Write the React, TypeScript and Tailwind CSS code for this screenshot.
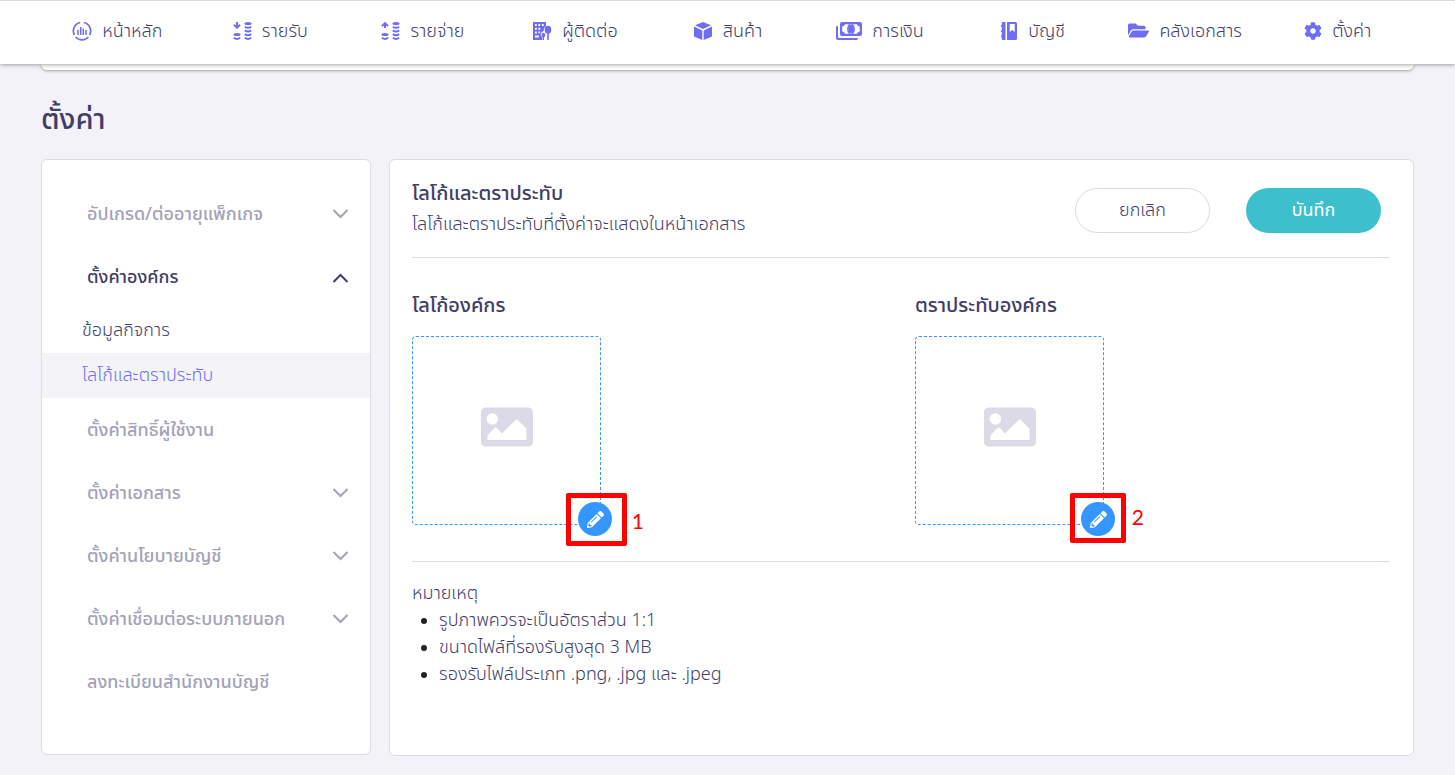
import React from "react";
import { FaCog, FaFolderOpen, FaImage, FaPencilAlt } from "react-icons/fa";

const HomeIcon = () => (
  <svg width="20" height="20" viewBox="0 0 20 20" fill="none" stroke="currentColor">
    <path d="M8.200 1.500A8.600 8.600 0 0 0 2.400 14M11.800 1.500A8.600 8.600 0 0 1 17.600 14M3.600 16A8.700 8.700 0 0 0 16.400 16" strokeWidth="1.700" />
    <path d="M6 9V14M8.700 6V14M11.300 7.500V14M14 9V14" strokeWidth="1.500" />
  </svg>
);

const CoinsIcon = ({ up = false }: { up?: boolean }) => (
  <svg width="20" height="20" viewBox="0 0 20 20" fill="currentColor">
    <path d={up ? "M5 .8L8.800 4.400L7.500 5.700L6 4.400V7H4V4.400L2.500 5.700L1.200 4.400Z" : "M5 8L8.800 4.400L7.500 3.100L6 4.400V1H4V4.400L2.500 3.100L1.200 4.400Z"} />
    <ellipse cx="5" cy="13.500" rx="3.600" ry="1.600" />
    <ellipse cx="16" cy="2.600" rx="3.600" ry="1.600" />
    <path
      d="M1.800 16.800Q5 19.200 8.200 16.800M12.800 5.700Q16 8 19.200 5.700M12.800 9.400Q16 11.700 19.200 9.400M12.800 13.100Q16 15.400 19.200 13.100M12.800 16.800Q16 19.200 19.200 16.800"
      fill="none"
      stroke="currentColor"
      strokeWidth="2"
    />
  </svg>
);

const ContactIcon = () => (
  <svg width="20" height="20" viewBox="0 0 20 20" fill="currentColor">
    <path
      fillRule="evenodd"
      d="M1 1H14V5Q11.500 6.500 11.700 10Q9 10.500 8.600 13.500Q8.700 15.500 10.400 16.200V19H1ZM3 3V5H4.800V3ZM6.400 3V5H8.200V3ZM9.900 3V5H11.700V3ZM3 6.800V8.800H4.800V6.800ZM6.400 6.800V8.800H8.200V6.800ZM3 10.600V12.600H4.800V10.600ZM6.400 10.600V12.200H7.600L8.200 10.600ZM3 14.500V16.500H6.800V14.500Z"
    />
    <ellipse cx="16" cy="8.700" rx="3.300" ry="3.900" />
    <path d="M15.200 11H16.800V19H15.200ZM10.800 15H12V19H10.800Z" />
    <ellipse cx="11.400" cy="14" rx="1.900" ry="2.200" />
  </svg>
);

const MoneyIcon = () => (
  <svg width="26" height="20" viewBox="0 0 26 20" fill="currentColor">
    <path
      fillRule="evenodd"
      d="M6 1H24Q26 1 26 3V13Q26 15 24 15H6Q4 15 4 13V3Q4 1 6 1ZM9 3.200Q8.600 5.300 6.200 5.500V10.500Q8.600 10.700 9 12.800H13Q11 11 11 8T13 3.200ZM17 3.200Q19 5 19 8T17 12.800H21Q21.400 10.700 23.800 10.500V5.500Q21.400 5.300 21 3.200ZM15 3.200Q12.500 4 12.500 8T15 12.800Q17.500 12 17.500 8T15 3.200Z"
    />
    <ellipse cx="15" cy="8" rx="2.800" ry="4.300" />
    <path d="M0 6Q0 5 2 5V16Q2 17 3 17H22Q22 19 20.500 19H2Q0 19 0 17Z" />
  </svg>
);

const BookIcon = () => (
  <svg width="18" height="20" viewBox="0 0 18 20" fill="currentColor">
    <path d="M2.500 1H5.500V19H2.500Q1.800 19 1.800 18V16.200H1V14.500H1.800V11H1V9.300H1.800V5.700H1V4H1.800V2Q1.800 1 2.500 1Z" />
    <path fillRule="evenodd" d="M7 1H15.500Q17 1 17 2.500V17.500Q17 19 15.500 19H7ZM9.700 3V11L12.200 9L14.700 11V3Z" />
  </svg>
);

// solid box with the top face split from the two sides
const CubeIcon = () => (
  <svg width="20" height="20" viewBox="0 0 20 20" fill="currentColor">
    <path d="M10 1L18 4.200L10 8L2 4.200ZM1 5.600L9.300 9.400V19L1 15.400ZM19 5.600L10.700 9.400V19L19 15.400Z" />
  </svg>
);

const Chevron = ({ open }: { open?: boolean }) => (
  <svg width="17" height="12" viewBox="0 0 17 12" fill="none" stroke="currentColor" strokeWidth="2">
    <path d={open ? "M1.500 11L8.500 4L15.500 11" : "M1.500 2L8.500 9L15.500 2"} />
  </svg>
);

export default function App() {
  return (
    <div className="min-h-screen bg-[#f3f2f8] pb-5 font-['Noto_Sans_Thai','Open_Sans',sans-serif] text-[#413d69]">
      <nav className="relative z-10 border-t border-[#dedede] bg-white px-[41px] shadow-[0_1px_4px_rgba(0,0,0,0.35)]">
        <ul className="grid h-[63px] grid-cols-9 pb-px">
          {navItems.map((item) => (
            <li key={item.label} className="flex items-center justify-center">
              <a href="#" className="flex items-center gap-[10px] whitespace-nowrap text-lg font-light">
                <span className="pb-[3px] text-[#6f6cf5]">{item.icon}</span>
                {item.label}
              </a>
            </li>
          ))}
        </ul>
      </nav>

      <div className="px-[41px]">
        <div className="h-[6px] rounded-b-md bg-white shadow-[0_1px_3px_rgba(0,0,0,0.35)]" />
        <h1 className="mt-[29px] mb-[18px] text-[29px] leading-[42px] font-medium">ตั้งค่า</h1>

        <div className="flex items-start gap-[18px]">
          <aside className="w-[330px] shrink-0 rounded-md border border-[#dbdae7] bg-white pt-[22px] pb-[41px]">
            {menu.map((item) => (
              <div key={item.label}>
                <button
                  className={
                    "flex h-[63px] w-full items-center justify-between pr-[21px] pl-[45px] text-left text-lg font-medium " +
                    (item.children ? "text-[#413d69]" : "text-[#a3a2b7]")
                  }
                >
                  <span className="pt-0.5">{item.label}</span>
                  {item.arrow && <Chevron open={!!item.children} />}
                </button>
                {item.children?.map((child) => (
                  <a
                    key={child.label}
                    href="#"
                    className={
                      "flex h-[45px] items-center pl-10 text-lg font-light " +
                      (child.active ? "bg-[#f4f4f7] text-[#6f6cf5]" : "")
                    }
                  >
                    {child.label}
                  </a>
                ))}
              </div>
            ))}
          </aside>

          <main className="min-w-0 flex-1 rounded-md border border-[#dbdae7] bg-white pr-[23px] pb-[67px] pl-[22px]">
            <header className="flex h-[98px] items-center justify-between border-b border-[#dbdae7] pt-1 pr-[9px]">
              <div className="pb-[3px]">
                <h2 className="text-xl leading-8 font-medium">โลโก้และตราประทับ</h2>
                <p className="text-lg leading-[30px] font-light">โลโก้และตราประทับที่ตั้งค่าจะแสดงในหน้าเอกสาร</p>
              </div>
              <div className="flex gap-9 text-lg">
                <button className="h-[45px] w-[135px] rounded-full border border-[#dbdae7] font-light">ยกเลิก</button>
                <button className="h-[45px] w-[135px] rounded-full bg-[#3ebfcc] text-white">บันทึก</button>
              </div>
            </header>

            <div className="grid grid-cols-2 gap-7 border-b border-[#dbdae7] pt-8 pb-9">
              {uploads.map((upload) => (
                <section key={upload.title}>
                  <h3 className="mb-[14px] text-xl leading-8 font-medium">{upload.title}</h3>
                  <div className="relative flex size-[189px] items-center justify-center rounded border border-dashed border-[#3397ff]">
                    <FaImage className="mt-[-8px] size-[52px] text-[#dbdae7]" />
                    <button
                      aria-label={upload.title}
                      className="absolute -right-3 -bottom-3 flex size-[34px] items-center justify-center rounded-full bg-[#3397ff] text-white"
                    >
                      <FaPencilAlt className="size-[17px]" />
                    </button>
                    <span className={"pointer-events-none absolute rounded-xs border-5 border-[#ff0000] " + upload.frame} />
                    <span className={"absolute font-['Lato',sans-serif] text-[21px] leading-6 text-[#ff0000] " + upload.mark}>{upload.number}</span>
                  </div>
                </section>
              ))}
            </div>

            <div className="pt-[18px] text-lg leading-[27px] font-light">
              <p>หมายเหตุ</p>
              <ul className="list-disc pl-[27px] marker:text-base marker:text-[#212529]">
                <li>รูปภาพควรจะเป็นอัตราส่วน 1:1</li>
                <li>ขนาดไฟล์ที่รองรับสูงสุด 3 MB</li>
                <li>รองรับไฟล์ประเภท .png, .jpg และ .jpeg</li>
              </ul>
            </div>
          </main>
        </div>
      </div>
    </div>
  );
}

const navItems = [
  { label: "หน้าหลัก", icon: <HomeIcon /> },
  { label: "รายรับ", icon: <CoinsIcon /> },
  { label: "รายจ่าย", icon: <CoinsIcon up /> },
  { label: "ผู้ติดต่อ", icon: <ContactIcon /> },
  { label: "สินค้า", icon: <CubeIcon /> },
  { label: "การเงิน", icon: <MoneyIcon /> },
  { label: "บัญชี", icon: <BookIcon /> },
  { label: "คลังเอกสาร", icon: <FaFolderOpen size={21} /> },
  { label: "ตั้งค่า", icon: <FaCog size={18} /> },
];

type MenuItem = {
  label: string;
  arrow?: boolean;
  children?: { label: string; active?: boolean }[];
};

const menu: MenuItem[] = [
  { label: "อัปเกรด/ต่ออายุแพ็กเกจ", arrow: true },
  {
    label: "ตั้งค่าองค์กร",
    arrow: true,
    children: [{ label: "ข้อมูลกิจการ" }, { label: "โลโก้และตราประทับ", active: true }],
  },
  { label: "ตั้งค่าสิทธิ์ผู้ใช้งาน" },
  { label: "ตั้งค่าเอกสาร", arrow: true },
  { label: "ตั้งค่านโยบายบัญชี", arrow: true },
  { label: "ตั้งค่าเชื่อมต่อระบบภายนอก", arrow: true },
  { label: "ลงทะเบียนสำนักงานบัญชี" },
];

const uploads = [
  {
    title: "โลโก้องค์กร",
    number: 1,
    frame: "-right-[27px] -bottom-[22px] h-[53px] w-[61px]",
    mark: "-right-[44px] -bottom-[9px]",
  },
  {
    title: "ตราประทับองค์กร",
    number: 2,
    frame: "-right-[23px] -bottom-[19px] h-[50px] w-[56px]",
    mark: "-right-[41px] -bottom-[5px]",
  },
];
